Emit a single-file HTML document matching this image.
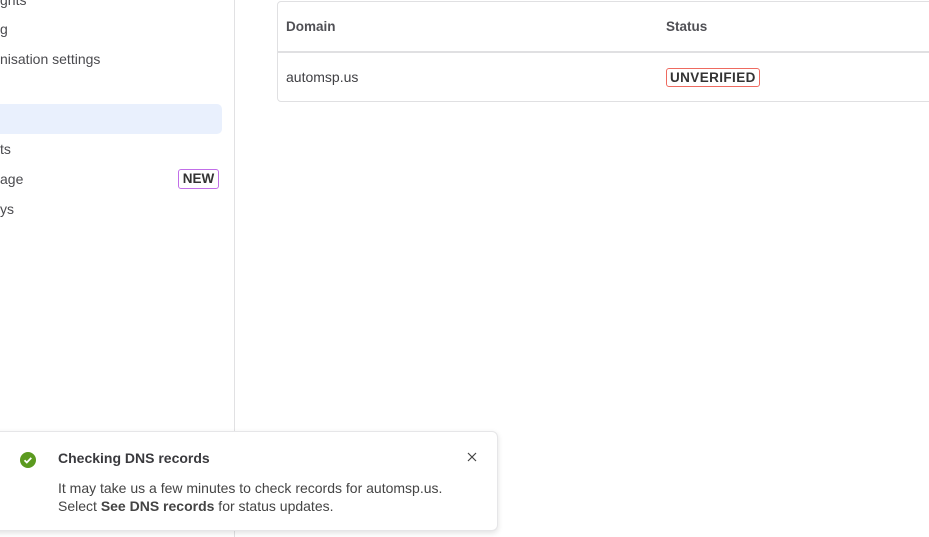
<!DOCTYPE html>
<html><head><style>
body{margin:0;width:929px;height:537px;overflow:hidden;background:#fff;font-family:"Liberation Sans",sans-serif;color:#3d3d40;position:relative}
.side{position:absolute;left:0;top:0;width:234px;height:537px;border-right:1px solid #e1e1e3}
.it{position:absolute;left:0;font-size:14px;color:#4a4a4e}
.sel{position:absolute;left:-10px;top:104px;width:232px;height:30px;background:#e9f0fd;border-radius:5px}
.new{position:absolute;left:178px;top:169px;width:39px;height:18px;border:1px solid #c16ee8;border-radius:3px;font-size:13.5px;font-weight:bold;text-align:center;line-height:18px;color:#333}
.tbl{position:absolute;left:277px;top:1px;width:670px;height:99px;border:1px solid #e0e0e2;border-radius:4px}
.hd{position:absolute;top:0;left:0;right:0;height:49px;border-bottom:2px solid #e0e0e2}
.th{position:absolute;top:17px;font-size:13.5px;font-weight:bold;color:#505055}
.td{position:absolute;top:67px;font-size:14px;color:#404044}
.badge{position:absolute;left:388px;top:66px;border:1px solid #ee6a60;border-radius:3px;padding:0 3px;font-size:13.5px;font-weight:bold;line-height:17px;color:#333;letter-spacing:0.4px}
.toast{position:absolute;left:-10px;top:431px;width:506px;height:98px;background:#fff;border:1px solid #e6e6e8;border-radius:6px;box-shadow:0 2px 6px rgba(0,0,0,0.12)}
</style></head><body>
<div class="side">
<div class="it" style="top:-8px">ghts</div>
<div class="it" style="top:21px">g</div>
<div class="it" style="top:51px">nisation settings</div>
<div class="sel"></div>
<div class="it" style="top:141px">ts</div>
<div class="it" style="top:171px">age</div>
<div class="new">NEW</div>
<div class="it" style="top:201px">ys</div>
</div>
<div class="tbl">
<div class="hd"></div>
<div class="th" style="left:8px">Domain</div>
<div class="th" style="left:388px">Status</div>
<div class="td" style="left:8px">automsp.us</div>
<div class="badge">UNVERIFIED</div>
</div>
<div class="toast">
<svg style="position:absolute;left:29px;top:20px" width="16" height="16" viewBox="0 0 16 16"><circle cx="8" cy="8" r="8" fill="#5b9a1f"/><path d="M4.5 8.2l2.3 2.3 4.5-4.6" stroke="#fff" stroke-width="1.8" fill="none"/></svg>
<div style="position:absolute;left:67px;top:18px;font-size:14px;font-weight:bold;color:#3a3a3e">Checking DNS records</div>
<div style="position:absolute;left:67px;top:47px;font-size:14px;line-height:18px;color:#444">It may take us a few minutes to check records for automsp.us.<br>Select <b>See DNS records</b> for status updates.</div>
<svg style="position:absolute;left:476px;top:20px" width="10" height="10" viewBox="0 0 10 10"><path d="M1 1l8 8M9 1l-8 8" stroke="#444" stroke-width="1.2"/></svg>
</div>
</body></html>
